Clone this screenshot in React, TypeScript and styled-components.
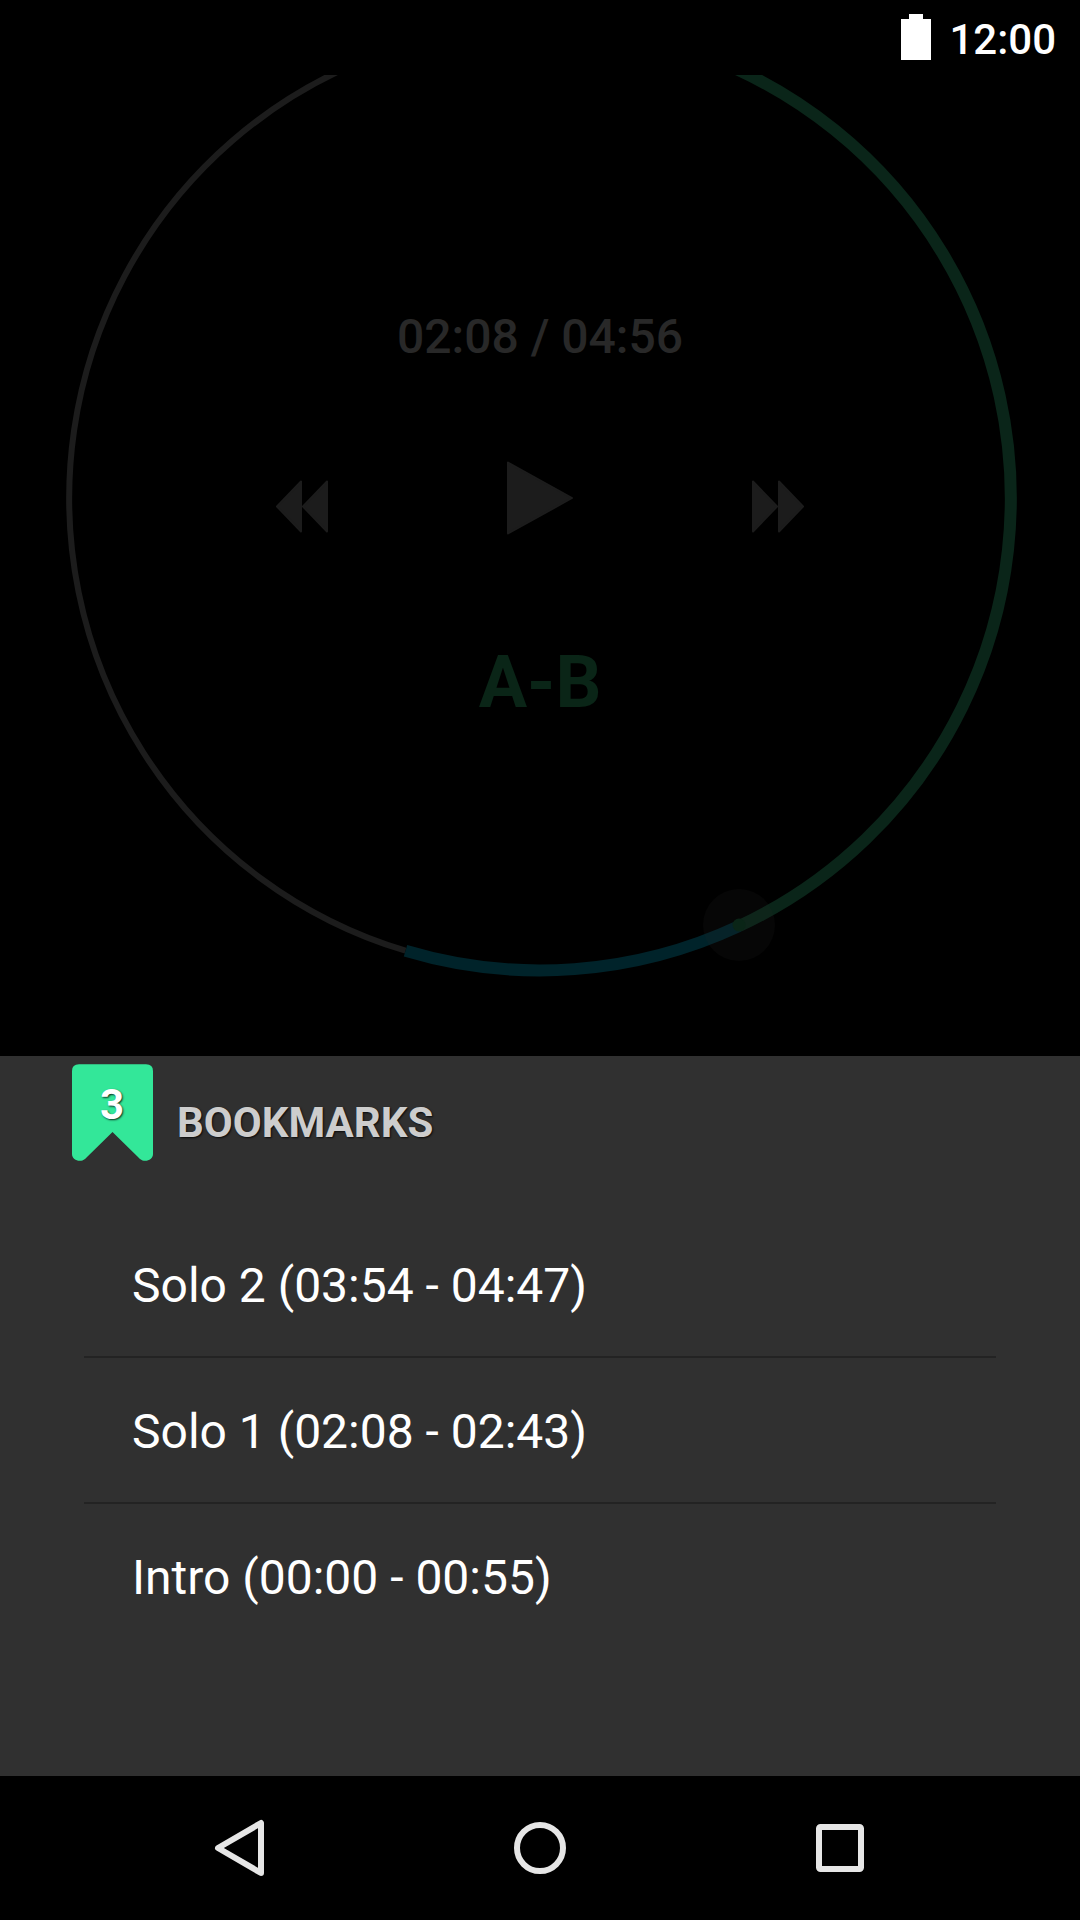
import React from "react";
import styled, { createGlobalStyle } from "styled-components";

const GlobalStyle = createGlobalStyle`
  body {
    margin: 0;
    background: #000;
    font-family: Roboto, "Noto Sans", sans-serif;
  }
`;

const Screen = styled.div`
  display: flex;
  flex-direction: column;
  width: 1080px;
  height: 1920px;
  overflow: hidden;
  background: #000;
`;

const StatusBar = styled.header`
  box-sizing: border-box;
  display: flex;
  flex: none;
  justify-content: flex-end;
  align-items: flex-start;
  gap: 18px;
  height: 75px;
  padding: 14px 24px 0 0;
`;

const BatteryIcon = styled.svg`
  display: block;
  width: 30px;
  height: 46px;
`;

const Clock = styled.time`
  margin-top: 1px;
  color: #fff;
  font-size: 42px;
  font-weight: 500;
  line-height: 50px;
`;

const Player = styled.main`
  display: grid;
  flex: none;
  height: 981px;
  overflow: hidden;
`;

const Dial = styled.svg`
  grid-area: 1 / 1;
  display: block;
  width: 1080px;
  height: 981px;
`;

const Controls = styled.div`
  grid-area: 1 / 1;
  display: flex;
  flex-direction: column;
  align-items: center;
  padding-top: 234px;
`;

const Elapsed = styled.div`
  color: #282828;
  font-size: 48px;
  font-weight: 500;
  line-height: 56px;
`;

const Transport = styled.div`
  display: flex;
  align-items: flex-start;
  justify-content: space-between;
  width: 528px;
  height: 75px;
  margin-top: 96px;
`;

const TransportButton = styled.button<{ $drop?: number }>`
  display: block;
  margin: ${({ $drop = 0 }) => $drop}px 0 0;
  padding: 0;
  border: 0;
  background: none;
  color: #1c1c1c;
  svg {
    display: block;
    fill: currentColor;
    stroke: currentColor;
    stroke-width: 2;
    stroke-linejoin: round;
  }
`;

const LoopButton = styled.button`
  margin-top: 105px;
  padding: 0;
  border: 0;
  background: none;
  color: #0a2517;
  font-family: inherit;
  font-size: 72px;
  font-weight: 700;
  line-height: 84px;
`;

const Sheet = styled.section`
  flex: none;
  height: 720px;
  background: #303030;
`;

const SheetHeader = styled.div`
  box-sizing: border-box;
  display: flex;
  align-items: flex-start;
  height: 156px;
  padding: 8px 0 0 72px;
`;

const Ribbon = styled.div`
  display: grid;
  width: 81px;
  height: 98px;
  svg {
    grid-area: 1 / 1;
    display: block;
  }
`;

const Count = styled.span`
  grid-area: 1 / 1;
  z-index: 1;
  margin: 16px 1px 0 0;
  color: #fff;
  font-size: 42px;
  font-weight: 700;
  line-height: 50px;
  text-align: center;
  text-shadow: 1px 1px 2px rgba(0, 0, 0, 0.8);
`;

const Title = styled.h2`
  margin: 34px 0 0 24px;
  color: #cdcdcd;
  font-size: 42px;
  font-weight: 700;
  line-height: 50px;
  text-shadow: 1px 1px 2px rgba(0, 0, 0, 0.8);
`;

const List = styled.ul`
  margin: 0 84px;
  padding: 0;
  list-style: none;
`;

const Item = styled.li`
  box-sizing: content-box;
  display: flex;
  align-items: center;
  height: 142px;
  padding: 2px 0 0 48px;
  color: #fff;
  font-size: 48px;
  & + & {
    border-top: 2px solid #232323;
  }
`;

const NavBar = styled.nav`
  display: flex;
  flex: 1;
  justify-content: center;
  gap: 204px;
  align-items: center;
`;

const NavIcon = styled.svg`
  display: block;
  width: 96px;
  height: 96px;
  fill: none;
  stroke: #e6e6e6;
  stroke-width: 6;
  stroke-linejoin: round;
`;

const RING = { x: 540, y: 498.2, rx: 470.8, ry: 472.2 };

/** Point on the ring, in degrees clockwise from twelve o'clock. */
const pointAt = (deg: number) => {
  const a = (deg * Math.PI) / 180;
  return [RING.x + RING.rx * Math.sin(a), RING.y - RING.ry * Math.cos(a)];
};

const arc = (from: number, to: number) => {
  const [x1, y1] = pointAt(from);
  const [x2, y2] = pointAt(to);
  return `M${x1} ${y1}A${RING.rx} ${RING.ry} 0 0 1 ${x2} ${y2}`;
};

const POSITION = 155;
const LOOP_END = 196.6;
const THUMB = { x: 739, y: 925 };

const bookmarks = [
  "Solo 2 (03:54 - 04:47)",
  "Solo 1 (02:08 - 02:43)",
  "Intro (00:00 - 00:55)",
];

export default function App() {
  return (
    <>
      <GlobalStyle />
      <Screen>
        <StatusBar>
          <BatteryIcon viewBox="0 0 30 46">
            <path d="M8 0h14v5h8v41H0V5h8z" fill="#fff" />
          </BatteryIcon>
          <Clock>12:00</Clock>
        </StatusBar>

        <Player>
          <Dial viewBox="0 75 1080 981" fill="none">
            <path d={arc(LOOP_END, 360)} stroke="#1c1c1c" strokeWidth="6" />
            <path d={arc(POSITION, LOOP_END)} stroke="#00232a" strokeWidth="12" />
            <path d={arc(0, POSITION)} stroke="#0a2519" strokeWidth="12" />
            <circle cx={THUMB.x} cy={THUMB.y} r="36" fill="#282828" fillOpacity="0.16" />
            <circle cx={THUMB.x} cy={THUMB.y} r="6.5" fill="#0a2517" />
          </Dial>
          <Controls>
            <Elapsed>02:08 / 04:56</Elapsed>
            <Transport>
              <TransportButton $drop={19} aria-label="Rewind">
                <svg width="52" height="53" viewBox="0 0 52 53">
                  <path d="M25 1.5v50L1 26.5zM51 1.5v50L27 26.5z" />
                </svg>
              </TransportButton>
              <TransportButton aria-label="Play">
                <svg width="68" height="75" viewBox="0 0 68 75">
                  <path d="M2 1.5v71L66 37z" />
                </svg>
              </TransportButton>
              <TransportButton $drop={19} aria-label="Fast forward">
                <svg width="52" height="53" viewBox="0 0 52 53">
                  <path d="M1 1.5v50L25 26.5zM27 1.5v50L51 26.5z" />
                </svg>
              </TransportButton>
            </Transport>
            <LoopButton>A-B</LoopButton>
          </Controls>
        </Player>

        <Sheet>
          <SheetHeader>
            <Ribbon>
              <svg width="81" height="98" viewBox="0 0 81 98">
                <path
                  d="M7 0.3H74Q81 0.3 81 7V90C81 96 73 99 68 95L40.5 68L13 95C8 99 0 96 0 90V7Q0 0.3 7 0.3z"
                  fill="#33e799"
                />
              </svg>
              <Count>3</Count>
            </Ribbon>
            <Title>BOOKMARKS</Title>
          </SheetHeader>
          <List>
            {bookmarks.map((label) => (
              <Item key={label}>{label}</Item>
            ))}
          </List>
        </Sheet>

        <NavBar>
          <NavIcon viewBox="0 0 96 96">
            <path d="M26 48L69 23V73z" />
          </NavIcon>
          <NavIcon viewBox="0 0 96 96">
            <circle cx="48" cy="48" r="23" />
          </NavIcon>
          <NavIcon viewBox="0 0 96 96">
            <rect x="27" y="27" width="42" height="42" rx="1.5" />
          </NavIcon>
        </NavBar>
      </Screen>
    </>
  );
}
